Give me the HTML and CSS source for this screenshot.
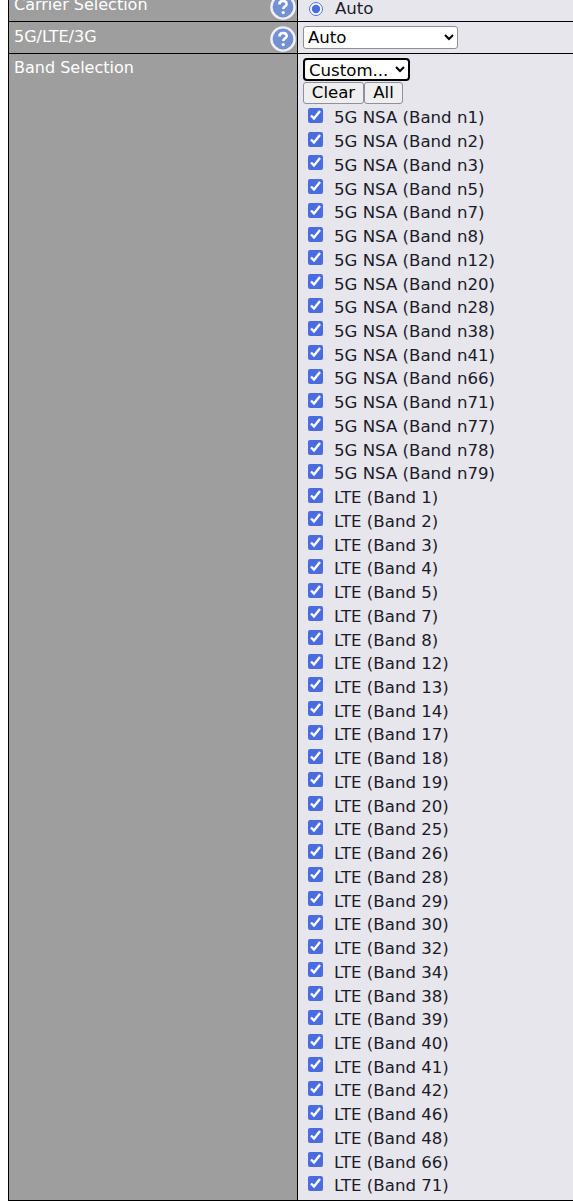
FILE: index.html
```html
<!DOCTYPE html>
<html lang="en">
<head>
    <meta charset="UTF-8">
    <title>Band Selection</title>
    <link rel="stylesheet" href="styles.css">
</head>
<body>
    <table class="settings">
        <tr class="row-carrier">
            <td class="label">
                <div class="label-inner">
                    <span class="label-text">Carrier Selection</span>
                    <svg class="help" viewBox="0 0 26 26"><circle cx="13" cy="13" r="11.6" fill="#7391d2" stroke="#eef1f9" stroke-width="2.4"/><path d="M9.4 10.4c0-2.2 1.6-3.5 3.7-3.5s3.6 1.2 3.6 3c0 2.5-3.5 2.7-3.5 5" fill="none" stroke="#fff" stroke-width="2.5"/><circle cx="13.2" cy="18.6" r="1.6" fill="#fff"/></svg>
                </div>
            </td>
            <td class="value">
                <label class="radio-line"><input type="radio" name="carrier" checked> Auto</label>
            </td>
        </tr>
        <tr class="row-mode">
            <td class="label">
                <div class="label-inner">
                    <span class="label-text">5G/LTE/3G</span>
                    <svg class="help" viewBox="0 0 26 26"><circle cx="13" cy="13" r="11.6" fill="#7391d2" stroke="#eef1f9" stroke-width="2.4"/><path d="M9.4 10.4c0-2.2 1.6-3.5 3.7-3.5s3.6 1.2 3.6 3c0 2.5-3.5 2.7-3.5 5" fill="none" stroke="#fff" stroke-width="2.5"/><circle cx="13.2" cy="18.6" r="1.6" fill="#fff"/></svg>
                </div>
            </td>
            <td class="value">
                <select class="mode-select"><option>Auto</option></select>
            </td>
        </tr>
        <tr>
            <td class="label"><span>Band Selection</span></td>
            <td class="value">
                <select class="band-select"><option>Custom...</option></select>
                <div class="btn-line">
                    <button type="button" class="btn-clear">Clear</button><button type="button" class="btn-all">All</button>
                </div>
                <div class="bands" id="bands">
                    <label class="band"><input type="checkbox" checked> 5G NSA (Band n1)</label>
                    <label class="band"><input type="checkbox" checked> 5G NSA (Band n2)</label>
                    <label class="band"><input type="checkbox" checked> 5G NSA (Band n3)</label>
                    <label class="band"><input type="checkbox" checked> 5G NSA (Band n5)</label>
                    <label class="band"><input type="checkbox" checked> 5G NSA (Band n7)</label>
                    <label class="band"><input type="checkbox" checked> 5G NSA (Band n8)</label>
                    <label class="band"><input type="checkbox" checked> 5G NSA (Band n12)</label>
                    <label class="band"><input type="checkbox" checked> 5G NSA (Band n20)</label>
                    <label class="band"><input type="checkbox" checked> 5G NSA (Band n28)</label>
                    <label class="band"><input type="checkbox" checked> 5G NSA (Band n38)</label>
                    <label class="band"><input type="checkbox" checked> 5G NSA (Band n41)</label>
                    <label class="band"><input type="checkbox" checked> 5G NSA (Band n66)</label>
                    <label class="band"><input type="checkbox" checked> 5G NSA (Band n71)</label>
                    <label class="band"><input type="checkbox" checked> 5G NSA (Band n77)</label>
                    <label class="band"><input type="checkbox" checked> 5G NSA (Band n78)</label>
                    <label class="band"><input type="checkbox" checked> 5G NSA (Band n79)</label>
                    <label class="band"><input type="checkbox" checked> LTE (Band 1)</label>
                    <label class="band"><input type="checkbox" checked> LTE (Band 2)</label>
                    <label class="band"><input type="checkbox" checked> LTE (Band 3)</label>
                    <label class="band"><input type="checkbox" checked> LTE (Band 4)</label>
                    <label class="band"><input type="checkbox" checked> LTE (Band 5)</label>
                    <label class="band"><input type="checkbox" checked> LTE (Band 7)</label>
                    <label class="band"><input type="checkbox" checked> LTE (Band 8)</label>
                    <label class="band"><input type="checkbox" checked> LTE (Band 12)</label>
                    <label class="band"><input type="checkbox" checked> LTE (Band 13)</label>
                    <label class="band"><input type="checkbox" checked> LTE (Band 14)</label>
                    <label class="band"><input type="checkbox" checked> LTE (Band 17)</label>
                    <label class="band"><input type="checkbox" checked> LTE (Band 18)</label>
                    <label class="band"><input type="checkbox" checked> LTE (Band 19)</label>
                    <label class="band"><input type="checkbox" checked> LTE (Band 20)</label>
                    <label class="band"><input type="checkbox" checked> LTE (Band 25)</label>
                    <label class="band"><input type="checkbox" checked> LTE (Band 26)</label>
                    <label class="band"><input type="checkbox" checked> LTE (Band 28)</label>
                    <label class="band"><input type="checkbox" checked> LTE (Band 29)</label>
                    <label class="band"><input type="checkbox" checked> LTE (Band 30)</label>
                    <label class="band"><input type="checkbox" checked> LTE (Band 32)</label>
                    <label class="band"><input type="checkbox" checked> LTE (Band 34)</label>
                    <label class="band"><input type="checkbox" checked> LTE (Band 38)</label>
                    <label class="band"><input type="checkbox" checked> LTE (Band 39)</label>
                    <label class="band"><input type="checkbox" checked> LTE (Band 40)</label>
                    <label class="band"><input type="checkbox" checked> LTE (Band 41)</label>
                    <label class="band"><input type="checkbox" checked> LTE (Band 42)</label>
                    <label class="band"><input type="checkbox" checked> LTE (Band 46)</label>
                    <label class="band"><input type="checkbox" checked> LTE (Band 48)</label>
                    <label class="band"><input type="checkbox" checked> LTE (Band 66)</label>
                    <label class="band"><input type="checkbox" checked> LTE (Band 71)</label>
                </div>
            </td>
        </tr>
    </table>
</body>
</html>
```

FILE: styles.css
```css
html, body {
    height: 100%;
    overflow: hidden;
}

body {
    margin: 0;
    padding: 0 0 0 8px;
    background-color: #fff;
    font-family: "DejaVu Sans", Tahoma, sans-serif;
    font-size: 16.6px;
    color: #1b1b2b;
}

.settings {
    width: 100%;
    margin-top: -11px;
    border-collapse: collapse;
    border-left: 1px solid #000;
    border-bottom: 1px solid #000;
    table-layout: fixed;
}

.settings td {
    padding: 0;
    vertical-align: top;
    border-top: 1px solid #000;
}

.settings .label {
    width: 289px;
    background-color: #9e9e9e;
    color: #fff;
    font-size: 16px;
    line-height: 20px;
    border-right: 1px solid #000;
    padding: 4px 5px 0;
    box-sizing: border-box;
}

.settings .value {
    background-color: #e6e6ec;
    padding: 4px 5px 0;
}

.label-inner {
    display: flex;
    justify-content: space-between;
}

.label-text {
    padding-top: 1px;
}

.row-carrier td,
.row-mode td {
    height: 27px;
}

.help {
    width: 26px;
    height: 26px;
    flex: none;
    margin-right: -4px;
}

.radio-line {
    display: flex;
    align-items: center;
    gap: 12px;
    padding: 5px 0 0 6px;
}

.radio-line input {
    margin: 0;
    width: 14px;
    height: 14px;
    accent-color: #4a6cde;
}

select {
    font-family: inherit;
    font-size: 16.6px;
    color: #000;
    display: block;
}

.mode-select {
    width: 155px;
    height: 23px;
    background-color: #fff;
    border: 1px solid #8f8f9d;
    border-radius: 3px;
}

.band-select {
    width: 107px;
    height: 23px;
    background-color: #fff;
    border: 2px solid #000;
    border-radius: 4px;
}

.btn-line {
    display: flex;
    margin-top: 1px;
}

.btn-line button {
    font-family: inherit;
    font-size: 16.6px;
    line-height: 20px;
    color: #000;
    height: 22px;
    padding: 0;
    background-color: #efeff0;
    border: 1px solid #8f8f9d;
    border-radius: 3px;
}

.btn-clear {
    width: 61px;
}

.btn-all {
    width: 39px;
}

.bands {
    padding-top: 2px;
    padding-bottom: 2px;
}

.band {
    display: flex;
    align-items: center;
    gap: 11px;
    height: 23.74px;
    padding-left: 5px;
}

.band input {
    margin: -5px 0 0;
    width: 15px;
    height: 15px;
    accent-color: #4a6cde;
    flex: none;
}
```
